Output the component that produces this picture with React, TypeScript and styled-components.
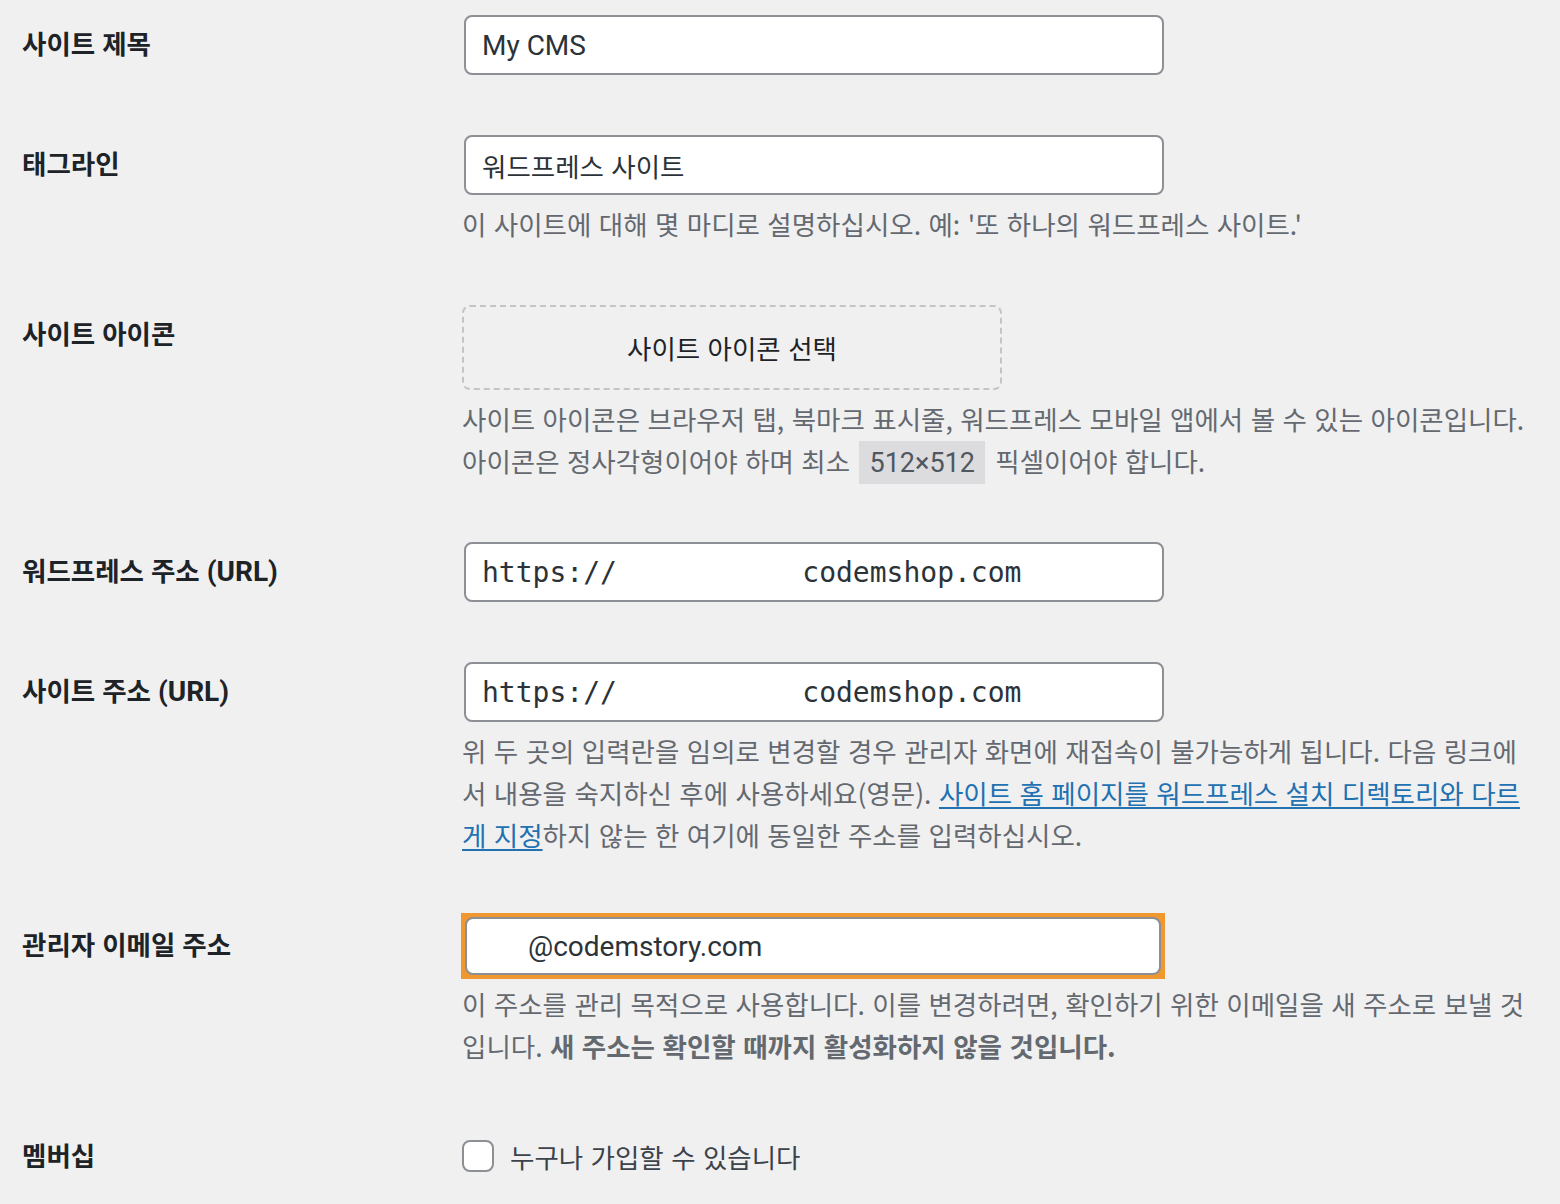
import React from "react";
import styled, { createGlobalStyle } from "styled-components";

const GlobalStyle = createGlobalStyle`
  html, body {
    margin: 0;
    padding: 0;
    background: #f0f0f1;
  }
  body {
    font-family: "Noto Sans CJK KR", "Noto Sans", sans-serif;
    color: #3c434a;
    overflow: hidden;
  }
`;

const CJK = `"Noto Sans CJK KR", "Noto Sans", sans-serif`;
const LATIN = `Roboto, "Noto Sans", "Noto Sans CJK KR", sans-serif`;
const MONO = `"DejaVu Sans Mono", "Liberation Mono", monospace`;
const KR_SIZE = "26.5px";

const Page = styled.main`
  padding: 0 30px 0 22px;
  margin-top: -15px;
`;

const Row = styled.section`
  display: grid;
  grid-template-columns: 440px 1068px;
`;

const Th = styled.div`
  padding-top: 40px;
  font-family: ${CJK};
  font-weight: 700;
  font-size: ${KR_SIZE};
  line-height: 36px;
  color: #1d2327;
  word-spacing: 1px;
`;

const Td = styled.div`
  padding: 30px 0;
`;

const Latin = styled.span`
  font-family: ${LATIN};
  font-size: 28px;
  line-height: 1;
`;

const TextInput = styled.input<{ $mono?: boolean; $cjk?: boolean; $indent?: number }>`
  box-sizing: border-box;
  display: block;
  margin: 0 2px;
  width: 700px;
  height: 60px;
  padding: 0 16px;
  border: 2px solid #8c8f94;
  border-radius: 8px;
  background: #fff;
  color: #2c3338;
  outline: none;
  font-family: ${(p) => (p.$mono ? MONO : p.$cjk ? CJK : LATIN)};
  font-size: ${(p) => (p.$cjk ? KR_SIZE : "28px")};
  word-spacing: ${(p) => (p.$cjk ? "1.5px" : "0")};
  text-indent: ${(p) => p.$indent ?? 0}px;
  white-space: pre;
`;

const FocusFrame = styled.div`
  display: block;
  width: 696px;
  margin: -3px 0 -4px -1px;
  border: 4px solid #f0982f;
  background: #f0982f;

  ${TextInput} {
    margin: 0;
    width: 696px;
    height: 58px;
  }
`;

const Description = styled.p`
  margin: 8px 0 0;
  font-family: ${CJK};
  font-size: ${KR_SIZE};
  line-height: 42px;
  color: #646970;
  word-spacing: 1.5px;

  strong {
    font-weight: 700;
  }
`;

const Code = styled.code`
  font-family: ${LATIN};
  font-size: 27px;
  line-height: 1;
  background: #dcdcde;
  color: #50575e;
  padding: 6px 10px 5px;
  margin: 0 3px 0 2px;
  word-spacing: 0;
`;

const Link = styled.a`
  color: #2271b1;
  text-decoration: underline;
  text-underline-offset: 3px;
  text-decoration-thickness: 2px;
`;

const IconButton = styled.button`
  box-sizing: border-box;
  display: flex;
  align-items: center;
  justify-content: center;
  width: 540px;
  height: 85px;
  margin: 0;
  padding: 0;
  border: 2px dashed #c3c4c7;
  border-radius: 8px;
  background: transparent;
  font-family: ${CJK};
  font-size: ${KR_SIZE};
  color: #1d2327;
  word-spacing: 1.5px;
  cursor: pointer;
`;

const CheckLabel = styled.label`
  display: flex;
  align-items: center;
  min-height: 58px;
  font-family: ${CJK};
  font-size: ${KR_SIZE};
  color: #3c434a;
  word-spacing: 1.5px;
`;

const Checkbox = styled.input`
  appearance: none;
  -webkit-appearance: none;
  box-sizing: border-box;
  width: 32px;
  height: 32px;
  margin: 0 16px 0 0;
  border: 2px solid #8c8f94;
  border-radius: 8px;
  background: #fff;
`;

export default function App() {
  return (
    <>
      <GlobalStyle />
      <Page>
        <Row>
          <Th>사이트 제목</Th>
          <Td>
            <TextInput defaultValue="My CMS" />
          </Td>
        </Row>

        <Row>
          <Th>태그라인</Th>
          <Td>
            <TextInput $cjk defaultValue="워드프레스 사이트" />
            <Description>
              이 사이트에 대해 몇 마디로 설명하십시오. 예: '또 하나의 워드프레스 사이트.'
            </Description>
          </Td>
        </Row>

        <Row>
          <Th>사이트 아이콘</Th>
          <Td>
            <IconButton type="button">사이트 아이콘 선택</IconButton>
            <Description>
              사이트 아이콘은 브라우저 탭, 북마크 표시줄, 워드프레스 모바일 앱에서 볼 수 있는 아이콘입니다. 아이콘은
              정사각형이어야 하며 최소 <Code>512×512</Code> 픽셀이어야 합니다.
            </Description>
          </Td>
        </Row>

        <Row>
          <Th>
            워드프레스 주소 <Latin>(URL)</Latin>
          </Th>
          <Td>
            <TextInput $mono defaultValue={"https://           codemshop.com"} />
          </Td>
        </Row>

        <Row>
          <Th>
            사이트 주소 <Latin>(URL)</Latin>
          </Th>
          <Td>
            <TextInput $mono defaultValue={"https://           codemshop.com"} />
            <Description>
              위 두 곳의 입력란을 임의로 변경할 경우 관리자 화면에 재접속이 불가능하게 됩니다. 다음 링크에서 내용을
              숙지하신 후에 사용하세요(영문).{" "}
              <Link href="#">사이트 홈 페이지를 워드프레스 설치 디렉토리와 다르게 지정</Link>하지 않는 한 여기에
              동일한 주소를 입력하십시오.
            </Description>
          </Td>
        </Row>

        <Row>
          <Th>관리자 이메일 주소</Th>
          <Td>
            <FocusFrame>
              <TextInput $indent={45} defaultValue="@codemstory.com" />
            </FocusFrame>
            <Description>
              이 주소를 관리 목적으로 사용합니다. 이를 변경하려면, 확인하기 위한 이메일을 새 주소로 보낼 것입니다.{" "}
              <strong>새 주소는 확인할 때까지 활성화하지 않을 것입니다.</strong>
            </Description>
          </Td>
        </Row>

        <Row>
          <Th>멤버십</Th>
          <Td>
            <CheckLabel>
              <Checkbox type="checkbox" />
              누구나 가입할 수 있습니다
            </CheckLabel>
          </Td>
        </Row>
      </Page>
    </>
  );
}
